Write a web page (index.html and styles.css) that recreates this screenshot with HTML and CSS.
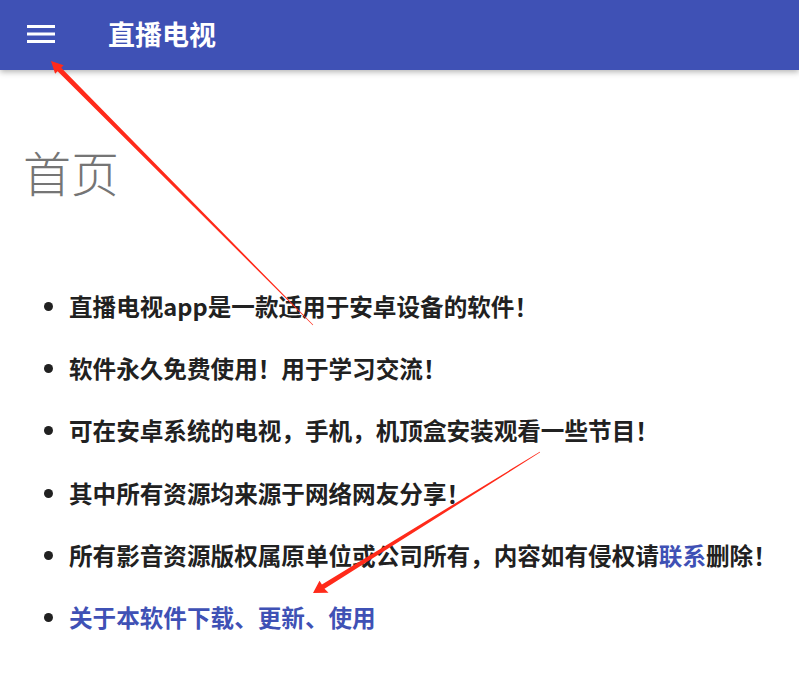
FILE: index.html
```html
<!DOCTYPE html>
<html lang="zh-CN">
<head>
<meta charset="utf-8">
<title>直播电视</title>
<link rel="stylesheet" href="styles.css">
</head>
<body>
<header class="topbar">
  <button class="menu-btn" aria-label="菜单">
    <svg width="28" height="19" viewBox="0 0 28 19"><rect x="0" y="0" width="28" height="3" fill="#fff"/><rect x="0" y="7.5" width="28" height="3" fill="#fff"/><rect x="0" y="15" width="28" height="3" fill="#fff"/></svg>
  </button>
  <div class="brand">直播电视</div>
</header>
<main class="content">
  <h1 class="page-title">首页</h1>
  <ul class="notes">
    <li>直播电视app是一款适用于安卓设备的软件！</li>
    <li>软件永久免费使用！用于学习交流！</li>
    <li>可在安卓系统的电视，手机，机顶盒安装观看一些节目！</li>
    <li>其中所有资源均来源于网络网友分享！</li>
    <li>所有影音资源版权属原单位或公司所有，内容如有侵权请<a href="#" class="link">联系</a>删除！</li>
    <li><a href="#" class="link">关于本软件下载、更新、使用</a></li>
  </ul>
</main>
<svg class="annot" width="799" height="673" viewBox="0 0 799 673">
  <polygon fill="#ff2a1a" points="51,61 63.7,65.3 61.2,67.7 313.2,324.8 312.8,325.2 57.6,71.3 55.1,73.7"/>
  <polygon fill="#ff2a1a" points="313,593 319.5,580.8 321.9,584.6 539.8,451.7 540.2,452.3 324.5,588.8 328.5,592.8"/>
</svg>
</body>
</html>
```

FILE: styles.css
```css
html, body {
  margin: 0;
  padding: 0;
  background: #fff;
}
body {
  font-family: "Noto Sans CJK SC", "Noto Sans", sans-serif;
  position: relative;
  width: 799px;
  height: 673px;
  overflow: hidden;
}
.topbar {
  height: 70px;
  background: #3f51b5;
  display: flex;
  align-items: center;
  box-shadow: 0 2px 6px rgba(0,0,0,0.3);
  position: relative;
  z-index: 1;
}
.menu-btn {
  background: none;
  border: 0;
  padding: 0;
  margin: 0 0 0 27px;
  width: 28px;
  height: 19px;
  display: flex;
  margin-top: -2px;
}
.brand {
  color: #fff;
  font-size: 27px;
  font-weight: 700;
  margin-left: 53px;
  margin-top: -4px;
  line-height: 1;
}
.content {
  padding: 0 25px;
}
.page-title {
  margin: 65px 0 0 -2px;
  font-size: 48px;
  font-weight: 300;
  color: #757575;
  line-height: 72px;
}
.notes {
  margin: 81px 0 0;
  padding-left: 44px;
  font-size: 23.6px;
  font-weight: 700;
  color: #212121;
  white-space: nowrap;
}
.notes li {
  line-height: 36px;
  margin-bottom: 26.2px;
}
.link {
  color: #3f51b5;
  text-decoration: none;
}
.annot {
  position: absolute;
  left: 0;
  top: 0;
  pointer-events: none;
  z-index: 2;
}
```
